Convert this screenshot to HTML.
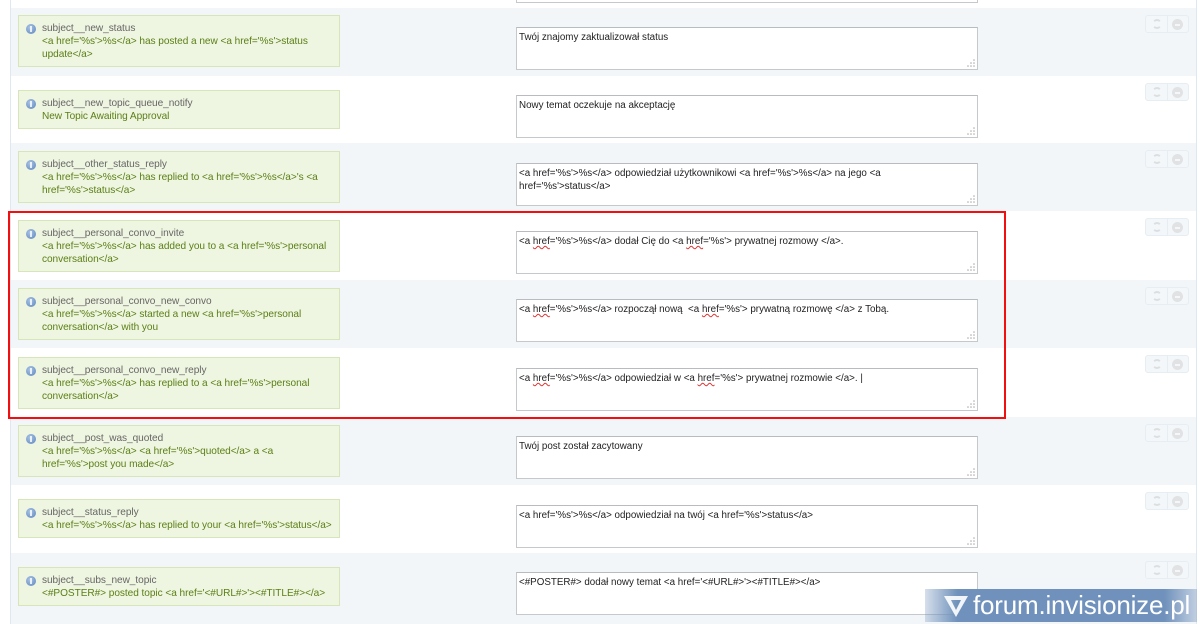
<!DOCTYPE html>
<html><head><meta charset="utf-8"><style>
*{margin:0;padding:0;box-sizing:border-box}
body{width:1200px;height:624px;overflow:hidden;background:#fff;font-family:"Liberation Sans",Arial,sans-serif;position:relative}
.frame{position:absolute;left:10px;top:0;width:1187px;height:624px;border-left:1px solid #dfe8f1;border-right:1px solid #dfe8f1}
.row{position:absolute;left:11px;width:1185px}
.row.l{background:#f3f6f9}
.box{position:absolute;left:7px;width:322px;background:#eef5e0;border:1px solid #d6e6b8;padding:6px 6px 5px 23px;font-size:10.1px;line-height:13px;letter-spacing:-0.05px}
.box .i{position:absolute;left:7px;top:8px;width:10px;height:10px;border-radius:50%;background:radial-gradient(circle at 40% 35%,#a9c4e6,#5b84bd);}
.box .i:after{content:"";position:absolute;left:4px;top:2px;width:2px;height:6px;background:#fff;opacity:.8}
.k{color:#666}
.d{color:#5b7f16}
.ta{position:absolute;left:505px;width:462px;height:43px;background:#fff;border:1px solid #c6c9cc;border-top-color:#b8bcc0;font-size:9.8px;line-height:13px;color:#222;padding:3px 2px}
.g{position:absolute;right:2px;bottom:2px;width:8px;height:8px}
.btn{position:absolute;left:1134px;width:44px;height:18px;border:1px solid #e6edf3;border-radius:3px;background:#f4f7f9}
.btn:before{content:"";position:absolute;left:21px;top:0;width:1px;height:16px;background:#e6edf3}
.btn .a{position:absolute;left:6px;top:3px;width:10px;height:10px;border:2px solid #dcdfe1;border-radius:50%;border-left-color:transparent;border-right-color:transparent}
.btn .b{position:absolute;left:26px;top:3px;width:11px;height:11px;border-radius:50%;background:#e0e2e4}
.btn .b:after{content:"";position:absolute;left:3px;top:5px;width:5px;height:1.5px;background:#f4f7f9}
u{text-decoration:underline wavy #d33;text-decoration-thickness:1px;text-underline-offset:1px}
.red{position:absolute;left:8px;top:211px;width:998px;height:208px;border:2px solid #f20f0f}
.wm{position:absolute;left:925px;top:589px;width:272px;height:33px;background:linear-gradient(90deg,rgba(120,150,190,.3),#6f91bb 12%,#6f91bb 88%,rgba(120,150,190,.4));color:#fff;font-size:26px;line-height:33px;padding-left:48px;letter-spacing:-0.2px}
.wm svg{position:absolute;left:18px;top:4px}
</style></head><body>
<svg width="0" height="0" style="position:absolute"><defs><g id="gr"><circle cx="7" cy="1" r=".8" fill="#aaa"/><circle cx="4" cy="4" r=".8" fill="#aaa"/><circle cx="7" cy="4" r=".8" fill="#aaa"/><circle cx="1" cy="7" r=".8" fill="#aaa"/><circle cx="4" cy="7" r=".8" fill="#aaa"/><circle cx="7" cy="7" r=".8" fill="#aaa"/></g></defs></svg>
<div class="frame"></div>
<div class="row" style="top:0;height:8px"><div class="ta" style="top:-40px"></div></div>

<div class="row l" style="top:8px;height:68px">
 <div class="box" style="top:7px"><span class="i"></span><div class="k">subject__new_status</div><div class="d">&lt;a href='%s'&gt;%s&lt;/a&gt; has posted a new &lt;a href='%s'&gt;status update&lt;/a&gt;</div></div>
 <div class="ta" style="top:19px">Twój znajomy zaktualizował status<svg class="g"><use href="#gr"/></svg></div>
 <div class="btn" style="top:7px"><span class="a"></span><span class="b"></span></div>
</div>
<div class="row" style="top:76px;height:67px">
 <div class="box" style="top:14px"><span class="i"></span><div class="k">subject__new_topic_queue_notify</div><div class="d">New Topic Awaiting Approval</div></div>
 <div class="ta" style="top:19px">Nowy temat oczekuje na akceptację<svg class="g"><use href="#gr"/></svg></div>
 <div class="btn" style="top:7px"><span class="a"></span><span class="b"></span></div>
</div>
<div class="row l" style="top:143px;height:68px">
 <div class="box" style="top:8px"><span class="i"></span><div class="k">subject__other_status_reply</div><div class="d">&lt;a href='%s'&gt;%s&lt;/a&gt; has replied to &lt;a href='%s'&gt;%s&lt;/a&gt;'s &lt;a href='%s'&gt;status&lt;/a&gt;</div></div>
 <div class="ta" style="top:20px">&lt;a href='%s'&gt;%s&lt;/a&gt; odpowiedział użytkownikowi &lt;a href='%s'&gt;%s&lt;/a&gt; na jego &lt;a<br>href='%s'&gt;status&lt;/a&gt;<svg class="g"><use href="#gr"/></svg></div>
 <div class="btn" style="top:7px"><span class="a"></span><span class="b"></span></div>
</div>
<div class="row" style="top:211px;height:69px">
 <div class="box" style="top:9px"><span class="i"></span><div class="k">subject__personal_convo_invite</div><div class="d">&lt;a href='%s'&gt;%s&lt;/a&gt; has added you to a &lt;a href='%s'&gt;personal conversation&lt;/a&gt;</div></div>
 <div class="ta" style="top:20px">&lt;a <u>href</u>='%s'&gt;%s&lt;/a&gt; dodał Cię do &lt;a <u>href</u>='%s'&gt; prywatnej rozmowy &lt;/a&gt;.<svg class="g"><use href="#gr"/></svg></div>
 <div class="btn" style="top:7px"><span class="a"></span><span class="b"></span></div>
</div>
<div class="row l" style="top:280px;height:68px">
 <div class="box" style="top:8px"><span class="i"></span><div class="k">subject__personal_convo_new_convo</div><div class="d">&lt;a href='%s'&gt;%s&lt;/a&gt; started a new &lt;a href='%s'&gt;personal conversation&lt;/a&gt; with you</div></div>
 <div class="ta" style="top:19px">&lt;a <u>href</u>='%s'&gt;%s&lt;/a&gt; rozpoczął nową &nbsp;&lt;a <u>href</u>='%s'&gt; prywatną rozmowę &lt;/a&gt; z Tobą.<svg class="g"><use href="#gr"/></svg></div>
 <div class="btn" style="top:7px"><span class="a"></span><span class="b"></span></div>
</div>
<div class="row" style="top:348px;height:69px">
 <div class="box" style="top:9px"><span class="i"></span><div class="k">subject__personal_convo_new_reply</div><div class="d">&lt;a href='%s'&gt;%s&lt;/a&gt; has replied to a &lt;a href='%s'&gt;personal conversation&lt;/a&gt;</div></div>
 <div class="ta" style="top:20px">&lt;a <u>href</u>='%s'&gt;%s&lt;/a&gt; odpowiedział w &lt;a <u>href</u>='%s'&gt; prywatnej rozmowie &lt;/a&gt;. |<svg class="g"><use href="#gr"/></svg></div>
 <div class="btn" style="top:7px"><span class="a"></span><span class="b"></span></div>
</div>
<div class="row l" style="top:417px;height:68px">
 <div class="box" style="top:8px"><span class="i"></span><div class="k">subject__post_was_quoted</div><div class="d">&lt;a href='%s'&gt;%s&lt;/a&gt; &lt;a href='%s'&gt;quoted&lt;/a&gt; a &lt;a href='%s'&gt;post you made&lt;/a&gt;</div></div>
 <div class="ta" style="top:19px">Twój post został zacytowany<svg class="g"><use href="#gr"/></svg></div>
 <div class="btn" style="top:7px"><span class="a"></span><span class="b"></span></div>
</div>
<div class="row" style="top:485px;height:68px">
 <div class="box" style="top:14px"><span class="i"></span><div class="k">subject__status_reply</div><div class="d">&lt;a href='%s'&gt;%s&lt;/a&gt; has replied to your &lt;a href='%s'&gt;status&lt;/a&gt;</div></div>
 <div class="ta" style="top:20px">&lt;a href='%s'&gt;%s&lt;/a&gt; odpowiedział na twój &lt;a href='%s'&gt;status&lt;/a&gt;<svg class="g"><use href="#gr"/></svg></div>
 <div class="btn" style="top:7px"><span class="a"></span><span class="b"></span></div>
</div>
<div class="row l" style="top:553px;height:71px">
 <div class="box" style="top:14px"><span class="i"></span><div class="k">subject__subs_new_topic</div><div class="d">&lt;#POSTER#&gt; posted topic &lt;a href='&lt;#URL#&gt;'&gt;&lt;#TITLE#&gt;&lt;/a&gt;</div></div>
 <div class="ta" style="top:19px">&lt;#POSTER#&gt; dodał nowy temat &lt;a href='&lt;#URL#&gt;'&gt;&lt;#TITLE#&gt;&lt;/a&gt;</div>
 <div class="btn" style="top:8px"><span class="a"></span><span class="b"></span></div>
</div>
<div class="red"></div>
<div class="wm"><svg width="26" height="25" viewBox="0 0 26 25"><path d="M1 3 L25 3 L13 24 Z M8 7 L13 17 L18 7 Z" fill="#fff" fill-rule="evenodd" opacity=".9"/></svg>forum.invisionize.pl</div>
</body></html>
